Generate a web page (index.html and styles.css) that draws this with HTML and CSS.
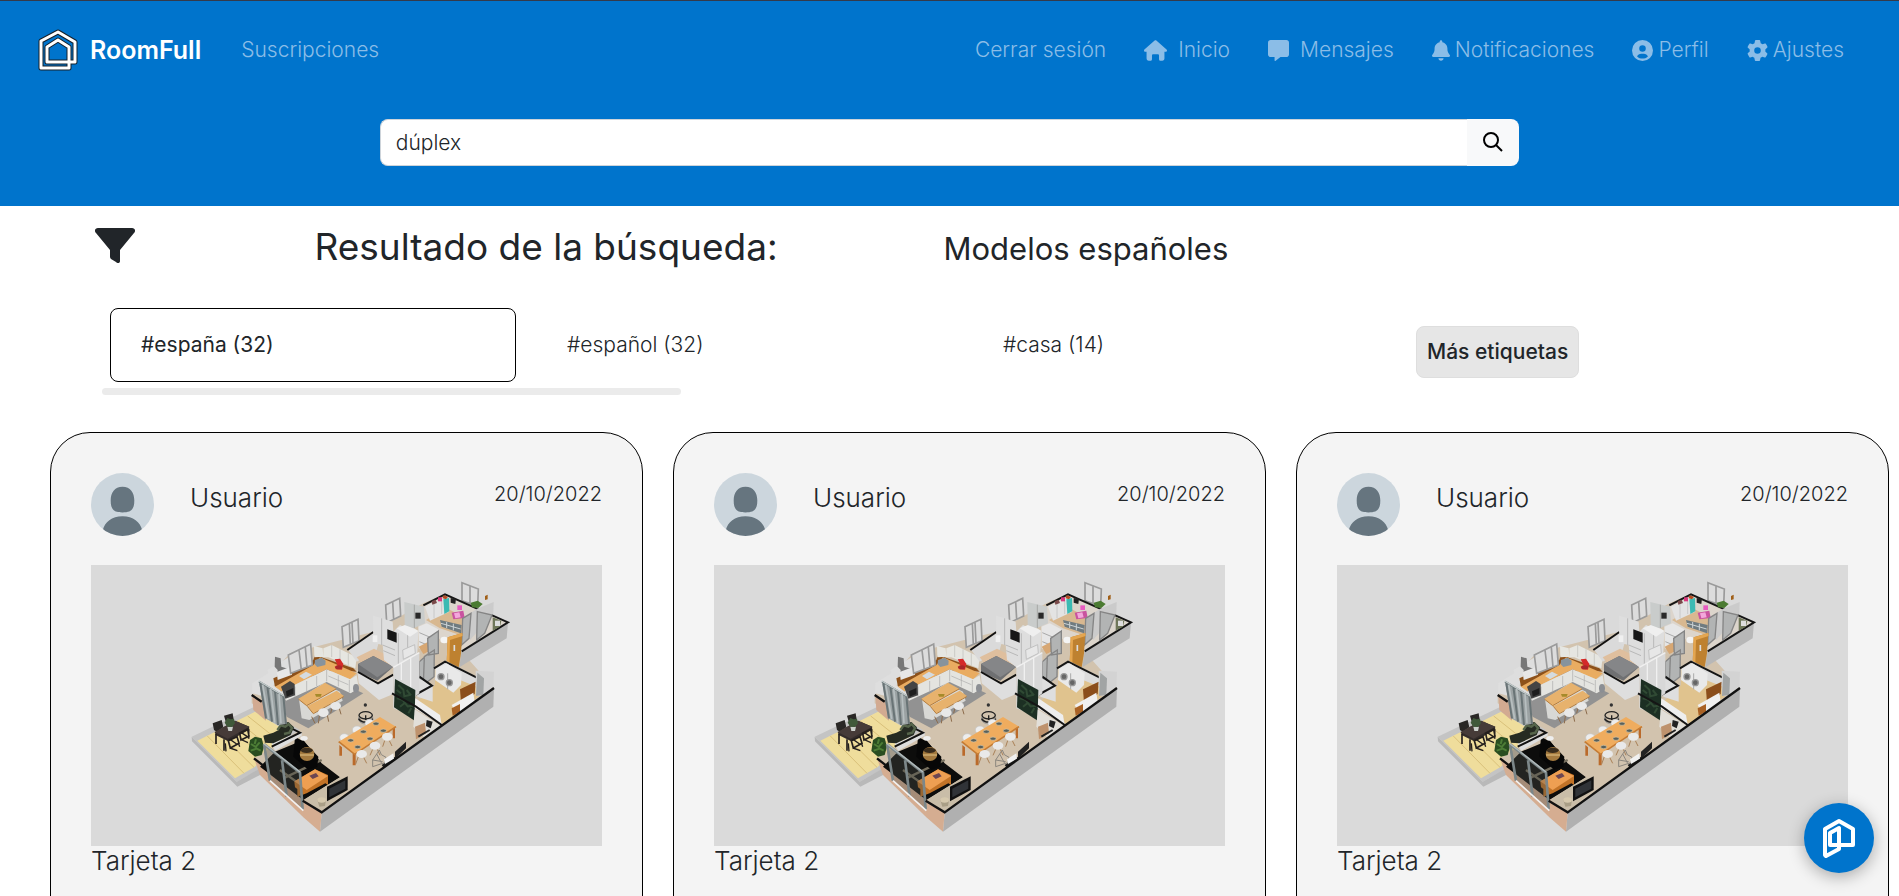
FILE: index.html
```html
<!DOCTYPE html>
<html lang="es">
<head>
<meta charset="utf-8">
<meta name="viewport" content="width=device-width, initial-scale=1">
<title>RoomFull</title>
<link rel="stylesheet" href="styles.css">
</head>
<body>
<svg class="sprites" aria-hidden="true">
  <symbol id="avatar" viewBox="0 0 64 64">
    <clipPath id="avatar-clip"><circle cx="32" cy="32" r="32"/></clipPath>
    <g clip-path="url(#avatar-clip)">
      <rect width="64" height="64" fill="#ccd6dd"/>
      <path d="M32 14c8 0 12 6 12 14 0 9-3 12-12 12s-12-3-12-12c0-8 4-14 12-14zM32 44c11 0 18 6 20 14v10H12V58c2-8 9-14 20-14z" fill="#66757f"/>
    </g>
  </symbol>
  <symbol id="house" viewBox="-267 -15 1533 843">
    <!-- terrace -->
    <path d="M35 500 235 405 370 480 305 560 170 635z" fill="#c4c4c4"/>
    <path d="M35 500 170 635 172 650 36 514zM170 635 240 595 240 615 172 650z" fill="#b9b9b9"/>
    <path d="M52 512 225 425 330 490 225 590 165 625z" fill="#efdd9c"/>
    <path d="M82 498 192 610M112 483 222 592M143 468 250 560M173 453 280 540M203 438 300 515" stroke="#d9c07a" stroke-width="3"/>
    <!-- main floor and outer walls -->
    <path d="M215 375 330 250 580 185 730 100 795 72 984 157 845 245 940 352 425 728 222 565 360 480 215 400z" fill="#d2c3ae"/>
    <path d="M425 728 942 352 940 410 420 785z" fill="#b0b0b0"/>
    <path d="M845 243 984 157 980 205 838 292z" fill="#b7b7b7"/>
    <path d="M222 565 425 728 420 785 370 742 240 615z" fill="#d5ad91"/>
    <path d="M217 375 258 400 258 452 220 420z" fill="#d2aa91"/>
    <!-- kitchen -->
    <path d="M300 380 440 320 550 370 385 475 320 440z" fill="#929292"/>
    <path d="M217 340 280 300 280 345 310 370 310 395 217 370zM262 300 326 262 336 320 280 345z" fill="#dedede"/>
    <path d="M280 325 325 305 400 270 405 255 520 295 530 305 470 300 335 335 285 350z" fill="#8d511a"/>
    <path d="M285 350 400 285 420 262 530 310 510 328 440 298 305 364z" fill="#e9ac61"/>
    <path d="M305 364 440 298 510 328 530 316 536 355 512 370 440 336 318 392z" fill="#e4e4e0"/>
    <path d="M345 350v30M380 333v30M410 318v30M440 300v34M475 316v33M508 330v36M445 318 505 344" stroke="#aaa" stroke-width="2"/>
    <path d="M402 228 428 235 430 260 403 262zM430 235 455 225 530 262 526 295 445 262 430 262z" fill="#e6e6e1"/>
    <path d="M455 225v36M480 238v36M505 250v36" stroke="#bcbcb8" stroke-width="2"/>
    <path d="M285 260 302 265 304 290 335 300 333 312 292 318 293 300 284 290z" fill="#777"/>
    <path d="M290 306 332 290 336 314 293 330z" fill="#e7e7e7"/>
    <path d="M303 350 330 333 344 342 345 376 316 386z" fill="#444"/>
    <path d="M318 364 340 354 340 372 320 380z" fill="#1e1e1e"/>
    <path d="M357 318 378 305 396 314 372 328z" fill="#d4dbe0"/>
    <path d="M405 270 425 263 437 272 436 285 412 291 404 283z" fill="#87939c"/>
    <path d="M464 268 480 266 490 282 486 299 468 298 464 290 473 286z" fill="#d42a29"/><ellipse cx="476" cy="292" rx="10" ry="6" fill="#a9282a"/>
    <path d="M357 388 365 445 388 450 488 392 480 365 430 340z" fill="#d8d8d5"/>
    <path d="M355 386 435 338 468 356 380 407zM382 408 470 362 492 378 400 430z" fill="#e7b26d"/>
    <path d="M356 388 380 407 468 357M382 409 400 431 491 380" fill="none" stroke="#b47b3a" stroke-width="3"/>
    <path d="M405 372h20l-3 8h-14z" fill="#a68a2a"/>
    <path d="M395 440l10 20M420 425l-5 35M440 425l6 30M458 405l-6 25M475 405l8 28" stroke="#8c6b4c" stroke-width="3"/>
    <ellipse cx="430" cy="428" rx="16" ry="13" fill="#e8e8e8"/><ellipse cx="467" cy="408" rx="16" ry="12" fill="#e8e8e8"/>
    <ellipse cx="528" cy="355" rx="9" ry="13" fill="#8c8f94"/>
    <!-- windows of the back facade -->
    <g fill="#dcdcdc" stroke="#9a9a9a" stroke-width="5">
      <path d="M325 255 392 222 397 285 332 310zM357 240 364 300M376 232 381 292"/>
      <path d="M486 170 534 148 537 212 490 232zM508 160 511 224M516 157 519 220"/>
      <path d="M617 105 659 85 662 138 620 158zM638 95 641 148"/>
      <path d="M846 38 895 57 893 108 846 92zM870 48 870 100"/>
    </g>
    <!-- bedroom -->
    <path d="M505 240 580 190 600 205 590 240 530 275z" fill="#dadada"/>
    <path d="M502 240 580 186" stroke="#111" stroke-width="6"/>
    <path d="M530 262 582 236 650 270 650 290 560 300z" fill="#dfbf9e"/>
    <path d="M532 300 595 340 640 318 640 372 597 390 536 340z" fill="#dedede"/>
    <path d="M534 282 580 258 640 290 592 332 534 306z" fill="#6f7072"/>
    <path d="M534 282 580 258 640 290 592 322z" fill="#858688"/>
    <path d="M534 306 594 340 640 314" fill="none" stroke="#111" stroke-width="6"/>
    <path d="M579 137 605 145 638 155 640 185 660 165 680 175 715 185 712 250 640 292 612 270 608 225 580 218z" fill="#dedede"/>
    <path d="M605 145v80M655 190v92M683 178v85M608 225 645 240M610 242 645 257" stroke="#b8b8b8" stroke-width="3"/>
    <path d="M622 178 650 188 650 218 622 207z" fill="#171717"/>
    <path d="M650 175 680 163 716 183 690 200z" fill="#efefef"/>
    <path d="M578 196h14v20h-14z" fill="#f0f0f0"/>
    <!-- second bedroom -->
    <path d="M730 105 795 72 984 157 845 245 715 170z" fill="#dcd5cc"/>
    <path d="M738 150 800 115 880 155 840 195 780 175z" fill="#d8b890"/>
    <path d="M730 106 795 73 984 157 845 244" fill="none" stroke="#151515" stroke-width="6"/>
    <path d="M735 110 798 80 808 125 750 152z" fill="#e3e3e3"/>
    <path d="M762 100v45M785 90v42" stroke="#bbb" stroke-width="2"/>
    <path d="M790 88 807 84 808 124 793 132z" fill="#3cbab3"/>
    <path d="M774 82h12v12h-12z" fill="#d9387d"/><path d="M790 76l14 4-6 8-10-3z" fill="#b44b21"/>
    <path d="M812 84 828 86 826 102 812 98z" fill="#222"/>
    <path d="M755 93l12-4 4 10-14 5z" fill="#7a4a4a"/>
    <path d="M673 96 732 110 735 160 700 175 674 165z" fill="#c9cccb"/><path d="M703 104v70" stroke="#a6a8a7" stroke-width="3"/>
    <path d="M706 128h16v18h-16z" fill="#292929"/>
    <path d="M780 150 845 165 843 190 785 170z" fill="#6f7b80"/><path d="M800 156v18M820 161v20M783 160 842 177" stroke="#cdd4d6" stroke-width="3"/>
    <path d="M815 128 850 122 854 144 820 148z" fill="#c9539f"/><path d="M832 106h14v14h-14z" fill="#e75bc0"/><path d="M822 130 838 127 842 142 826 145z" fill="#f3a7db"/>
    <path d="M715 170 740 160 775 178 770 230 745 250 716 235z" fill="#e6e6e6"/><path d="M718 188 758 205M718 215 750 228" stroke="#a9a9a9" stroke-width="3"/>
    <path d="M716 230 745 215 745 245 730 252z" fill="#d7a773"/>
    <ellipse cx="793" cy="210" rx="12" ry="10" fill="#f4f4f4"/>
    <path d="M872 98 893 92 908 102 895 114 876 112z" fill="#4b7b32"/><path d="M915 78 923 74 923 88 915 90z" fill="#a05f18"/>
    <path d="M895 115 941 96 940 130 915 160 870 210 870 130z" fill="#cbcbcb"/>
    <path d="M938 142 964 152 960 170 938 182z" fill="#6f7759"/><path d="M945 152h15v16h-15z" fill="#ddd"/>
    <!-- partition doors -->
    <g fill="#b2b4b4" stroke="#858585" stroke-width="4">
      <path d="M743 205 775 183 775 250 745 255zM848 145 873 130 867 205 845 225zM892 125 936 135 914 190 890 210zM733 260 763 240 762 320 730 345zM718 275 733 262 730 345 718 325z"/>
    </g>
    <path d="M803 202 847 189 843 250 836 292 800 280z" fill="#be8130"/><path d="M803 202 847 189 848 198 810 210 808 281 800 280z" fill="#e4a650"/><path d="M823 225v18" stroke="#ddd" stroke-width="5"/>
    <!-- laundry and bathroom -->
    <path d="M718 390 765 345 765 290 800 275 895 330 895 380 790 462 710 410z" fill="#e0c38e"/>
    <path d="M765 290 800 274 893 322 890 350 840 330 768 310z" fill="#dcdcdc"/>
    <path d="M762 295 795 275 895 325" fill="none" stroke="#151515" stroke-width="6"/>
    <path d="M767 297 800 280 845 310 843 345 820 368 765 330z" fill="#e9e9e9"/><path d="M803 310v48" stroke="#aaa" stroke-width="3"/>
    <circle cx="783" cy="320" r="9" fill="#666" stroke="#999" stroke-width="4"/><circle cx="808" cy="338" r="9" fill="#666" stroke="#999" stroke-width="4"/>
    <path d="M840 358 887 335 884 372 843 400z" fill="#8b4e1b"/><path d="M815 405 880 368 884 395 830 435z" fill="#f0f0f0"/><path d="M815 415 840 402 840 425 818 437z" fill="#a96225"/>
    <path d="M887 302 942 305 940 350 910 375 888 378z" fill="#d3d3d3"/><path d="M892 308 912 325 910 374 888 378z" fill="#a1a4a4"/>
    <path d="M715 325 758 345 758 395 712 380z" fill="#dedede"/><path d="M705 375 756 347 718 320" fill="none" stroke="#151515" stroke-width="6"/>
    <path d="M640 292 718 248 718 370 705 380 705 440 640 415z" fill="#d8d8d8"/>
    <path d="M640 292 718 248M664 280v50M692 263v90" stroke="#f0f0f0" stroke-width="4"/>
    <path d="M668 240 704 224 706 250 670 268z" fill="#e7e7e7" stroke="#c1c1c1" stroke-width="3"/>
    <path d="M645 327 706 360 704 452 642 412z" fill="#1c2f23"/><path d="M655 345l15 14 3 20 19-5M650 385l17 4 16 20 17-2M660 410l15-12M685 430l9-16M650 360l13 10M680 360l13 16" stroke="#304a34" stroke-width="6" fill="none"/>
    <path d="M706 385 780 435 785 465 704 415z" fill="#eee"/><path d="M636 370 708 410 785 465" fill="none" stroke="#151515" stroke-width="6"/>
    <path d="M704 418 782 467 735 505 700 470z" fill="#e2dfd9"/>
    <path d="M705 470 735 458 738 490 708 508z" fill="#be926d"/><path d="M740 450 758 455 752 475 738 468z" fill="#222"/><path d="M715 500l34-20" stroke="#222" stroke-width="6"/>
    <!-- dining room -->
    <path d="M536 441v10c8 14 34 14 42 0v-10" fill="none" stroke="#999" stroke-width="3"/><ellipse cx="557" cy="436" rx="20" ry="11" fill="none" stroke="#222" stroke-width="4"/><path d="M536 446c8 14 34 14 42 0" fill="none" stroke="#222" stroke-width="5"/><path d="M557 436v14" stroke="#222" stroke-width="4"/><circle cx="556" cy="405" r="5" fill="#333"/>
    <g fill="#ededed" stroke="#c4c4c4" stroke-width="2"><ellipse cx="493" cy="503" rx="14" ry="12"/><ellipse cx="531" cy="480" rx="14" ry="12"/><ellipse cx="569" cy="460" rx="14" ry="12"/></g>
    <path d="M478 525v32h8v-25zM518 550v36h9v-38zM638 475v30h7v-36z" fill="#ba6a2b"/>
    <path d="M476 515 600 441 648 470 524 553z" fill="#efac5e"/><path d="M476 515 524 553 648 470" fill="none" stroke="#c47b34" stroke-width="5"/>
    <g fill="#59605a" stroke="#cfc3a8" stroke-width="2"><ellipse cx="512" cy="511" rx="9" ry="5"/><ellipse cx="550" cy="485" rx="9" ry="5"/><ellipse cx="588" cy="461" rx="9" ry="5"/><ellipse cx="533" cy="531" rx="9" ry="5"/><ellipse cx="570" cy="506" rx="9" ry="5"/><ellipse cx="610" cy="482" rx="9" ry="5"/></g>
    <path d="M535 560l-8 22M550 560l10 20M578 538l-8 18M592 538l8 18M614 512l-6 18M628 512l8 16" stroke="#a98158" stroke-width="3"/>
    <g fill="#e9e9e9"><ellipse cx="545" cy="552" rx="16" ry="12"/><ellipse cx="585" cy="527" rx="16" ry="12"/><ellipse cx="622" cy="500" rx="16" ry="12"/></g>
    <path d="M578 590v-20l12-18 8-12 6 14 14 8-4 16zM590 552l15 28M578 570l30 5" fill="none" stroke="#8b867e" stroke-width="3"/>
    <path d="M605 585 645 560 645 545 678 515 678 535 640 572 610 592z" fill="#222"/><path d="M612 568 640 550 642 566 615 582z" fill="#f1f1f1"/>
    <!-- living room -->
    <path d="M285 545 370 510 425 580 480 622 370 690 240 590z" fill="#0d0d0c"/>
    <path d="M310 625 425 570M300 600 370 650" stroke="#77705f" stroke-width="7"/>
    <path d="M345 500 372 515 415 560 412 590 385 600 340 560z" fill="#070707"/>
    <ellipse cx="381" cy="552" rx="22" ry="21" fill="#a47a3f"/><ellipse cx="380" cy="541" rx="18" ry="8" fill="#392c1c"/><path d="M360 555h42" stroke="#d3b275" stroke-width="4"/>
    <path d="M343 635 345 652 352 657 352 680 380 670 436 640 444 645 444 615 405 598z" fill="#c27327"/><path d="M343 634 405 598 444 618 380 660z" fill="#ee9f52"/><path d="M388 617l20-8 8 10-18 8z" fill="#6d4652"/>
    <path d="M372 690 480 622 503 632 495 665 425 725z" fill="#c9bda8"/>
    <path d="M441 650 503 619 503 660 441 694z" fill="#111"/><path d="M448 656 496 631 496 656 448 682z" fill="#303337"/>
    <path d="M412 690 418 710 435 708 438 690" fill="#a99e86"/><ellipse cx="425" cy="690" rx="13" ry="8" fill="#d6c9ae"/>
    <path d="M275 520 365 485 365 497 285 543z" fill="#dedede"/><path d="M300 458 360 488 275 530" fill="none" stroke="#121212" stroke-width="6"/>
    <ellipse cx="372" cy="505" rx="11" ry="7" fill="#eee"/>
    <path d="M250 497 280 488 296 480 302 462 325 456 342 472 332 495 280 520 255 518z" fill="#262b22"/><path d="M292 480l10-14 14 4 10-8 10 12-8 14-16 4" stroke="#56654b" stroke-width="7" fill="none"/>
    <path d="M210 510 225 500 245 505 252 530 245 555 225 560 205 543z" fill="#294d20"/><path d="M213 522l14 9 12-14M212 542l18-6 12 6M228 508l-4 14" stroke="#4d7d36" stroke-width="6" fill="none"/>
    <!-- glazed panels -->
    <path d="M237 335 308 375 320 462 295 465 255 445z" fill="#9ba2a3"/>
    <path d="M237 335 310 378M241 340 258 445M262 350 276 455M285 363 294 465M310 378 318 462" stroke="#697476" stroke-width="6"/><path d="M248 344 266 447M272 357 284 458M297 372 303 460" stroke="#b7bfc0" stroke-width="5"/>
    <path d="M236 333 312 378" stroke="#c3cbcb" stroke-width="4"/>
    <path d="M252 523 360 608 368 718 270 630z" fill="#4d514a" fill-opacity=".35"/>
    <path d="M252 523 360 608 368 718M252 523 270 632M306 570 320 680" fill="none" stroke="#7c8789" stroke-width="8"/>
    <path d="M252 521 360 606" stroke="#b3bcbd" stroke-width="4"/>
    <path d="M270 632 370 722" stroke="#f1f1f1" stroke-width="5"/>
    <!-- terrace furniture -->
    <path d="M98 460 125 450 130 472 110 485 102 480zM132 437 158 430 162 455 140 465z" fill="#292725"/>
    <path d="M104 487 165 452 208 470 206 480 145 514 108 496z" fill="#332c2a"/>
    <path d="M104 486 165 452 208 470 143 506z" fill="#463b38"/>
    <path d="M108 492v30M132 508v34M206 476v30M145 512l26-12 6 20-26 14zM179 490l24-12 4 20-24 12z" fill="none" stroke="#241f1d" stroke-width="5"/>
    <path d="M150 508l20 14M184 488l18 12M136 520l2 24M150 534l22 8M175 518l4 12M186 510l18 8" stroke="#241f1d" stroke-width="4"/>
    <path d="M142 470h17l-3 13h-11z" fill="#cbd0cb"/><path d="M134 458 142 444 152 448 162 446 165 460 156 471 142 470z" fill="#40593a"/>
    <path d="M215 375 245 395M222 565 250 587M368 692 425 727 942 354" fill="none" stroke="#111" stroke-width="7"/>
  </symbol>
</svg>

<div class="page">
  <header class="header">
    <nav class="navbar" aria-label="Principal">
      <a class="brand" href="#">
        <svg class="brand-logo" viewBox="0 0 40 42" fill="none" stroke-linejoin="round" aria-hidden="true">
          <path d="M3 12 20 3 37 13V33H9V18L20 11 31 18V39H3z" stroke="#17202a" stroke-width="5"/>
          <path d="M3 12 20 3 37 13V33H9V18L20 11 31 18V39H3z" stroke="#fff" stroke-width="3"/>
        </svg>
        RoomFull
      </a>
      <a class="nav-link" href="#">Suscripciones</a>
      <div class="nav-end">
        <a class="nav-link" href="#">Cerrar sesión</a>
        <a class="nav-link wide" href="#"><svg viewBox="0 0 576 512" width="23" height="21" aria-hidden="true"><path d="M575.800 255.500c0 18-15 32.100-32 32.100h-32l.7 160.200c0 35-20 64.200-56 64.200H416c-22 0-40-18-40-40v-88c0-18-14-32-32-32H232c-18 0-32 14-32 32v88c0 22-18 40-40 40h-40c-36 0-56-28-56-64V287.600H32c-18 0-32-14-32-32.100 0-9 3-17 10-24L266.400 8c7-7 15-8 22-8s15 2 21 7l255.400 224.500c8 7 12 15 11 24z"/></svg>Inicio</a>
        <a class="nav-link wide" href="#"><svg viewBox="0 0 512 512" width="21" height="21" aria-hidden="true"><path d="M448 0H64C28.700 0 0 28.700 0 64v288c0 35.300 28.700 64 64 64h96v84c0 9.800 11.200 15.500 19.100 9.700L304 416h144c35.300 0 64-28.700 64-64V64c0-35.300-28.700-64-64-64z"/></svg>Mensajes</a>
        <a class="nav-link" href="#"><svg viewBox="0 0 448 512" width="18" height="21" aria-hidden="true"><path d="M224 0c-17.700 0-32 14.300-32 32v19.200C119 66 64 130.600 64 208v18.800c0 47-17.300 92.400-48.500 127.600l-7.400 8.300c-8.400 9.400-10.400 22.900-5.300 34.400S19.400 416 32 416h384c12.600 0 24-7.400 29.200-18.900s3.100-25-5.300-34.400l-7.400-8.300C401.300 319.200 384 273.900 384 226.800V208c0-77.400-55-142-128-156.800V32c0-17.700-14.300-32-32-32zm45.300 493.300c12-12 18.700-28.300 18.700-45.300H160c0 17 6.700 33.300 18.700 45.300S207 512 224 512s33.300-6.700 45.300-18.700z"/></svg>Notificaciones</a>
        <a class="nav-link" href="#"><svg viewBox="0 0 512 512" width="21" height="21" aria-hidden="true"><path fill-rule="evenodd" d="M256 0a256 256 0 1 0 0 512 256 256 0 0 0 0-512zm0 128a80 80 0 1 1 0 160 80 80 0 0 1 0-160zm-132 272c20-38 54-64 100-64h64c46 0 80 26 100 64-76 72-188 72-264 0z"/></svg>Perfil</a>
        <a class="nav-link" href="#"><svg viewBox="0 0 512 512" width="21" height="21" aria-hidden="true"><path fill-rule="evenodd" d="M495.900 166.600c3.200 8.700.5 18.400-6.400 24.600l-43.300 39.400c1.100 8.300 1.700 16.800 1.700 25.400s-.6 17.100-1.700 25.400l43.300 39.400c6.900 6.200 9.600 15.900 6.400 24.600-10 27-25 53-42 75-6 7-15 10-24 7l-55.700-17.700c-13.400 10.300-28.200 18.900-44 25.400l-12.500 57.100c-2 9.100-9 16.300-18.200 17.800-29 5-61 5-90 0-9.200-1.500-16.200-8.700-18.200-17.800l-12.500-57.100c-15.800-6.500-30.600-15.100-44-25.400L83.100 425.900c-9 3-18 0-24-7-18-23-32-48-42-75-3.200-8.700-.5-18.400 6.400-24.600l43.300-39.400C65.600 273.100 65 264.600 65 256s.6-17.100 1.700-25.400l-43.200-39.400c-6.900-6.200-9.600-15.900-6.400-24.600 10-27 25-53 42-75 6-7 15-10 24-7l55.700 17.700c13.400-10.300 28.200-18.900 44-25.400l12.500-57.100c2-9.100 9-16.300 18.200-17.800 29-5 61-5 90 0 9.200 1.500 16.200 8.700 18.200 17.800l12.500 57.100c15.800 6.500 30.600 15.100 44 25.400l55.700-17.700c9-3 18 0 24 7 18 23 32 48 42 75zM256 336a80 80 0 1 0 0-160 80 80 0 0 0 0 160z"/></svg>Ajustes</a>
      </div>
    </nav>
    <form class="search" role="search">
      <input class="search-input" type="search" value="dúplex" aria-label="Buscar">
      <button class="search-button" type="button" aria-label="Buscar">
        <svg viewBox="0 0 20 20" width="20" height="20" fill="none" stroke="#000" stroke-width="2" aria-hidden="true"><circle cx="8" cy="8" r="7"/><path d="m13 13 6 6"/></svg>
      </button>
    </form>
  </header>

  <main>
    <div class="results">
      <button class="filter" type="button" aria-label="Filtrar">
        <svg viewBox="0 0 40 35" width="40" height="35" aria-hidden="true"><path d="M3 0H37C40 0 41 3 39 5L25 22V33C25 35 23 36 21 34L16 31C15 30 15 29 15 28V22L1 5C-1 3 0 0 3 0z" fill="#212529"/></svg>
      </button>
      <h1 class="results-title">Resultado de la búsqueda:</h1>
      <h2 class="results-subtitle">Modelos españoles</h2>
    </div>

    <div class="tags">
      <a class="tag tag-active" href="#">#españa (32)</a>
      <a class="tag" href="#">#español (32)</a>
      <a class="tag" href="#">#casa (14)</a>
      <button class="more" type="button">Más etiquetas</button>
    </div>
    <div class="scroll-track"></div>

    <div class="cards">
      <article class="card">
        <div class="card-head">
          <svg class="avatar" role="img" aria-label="Avatar"><use href="#avatar"/></svg>
          <span class="user">Usuario</span>
          <time class="date" datetime="2022-10-20">20/10/2022</time>
        </div>
        <svg class="photo" viewBox="0 0 1533 843" role="img" aria-label="Plano 3D de la vivienda"><use href="#house" width="1533" height="843"/></svg>
        <h3 class="card-title">Tarjeta 2</h3>
      </article>
      <article class="card">
        <div class="card-head">
          <svg class="avatar" role="img" aria-label="Avatar"><use href="#avatar"/></svg>
          <span class="user">Usuario</span>
          <time class="date" datetime="2022-10-20">20/10/2022</time>
        </div>
        <svg class="photo" viewBox="0 0 1533 843" role="img" aria-label="Plano 3D de la vivienda"><use href="#house" width="1533" height="843"/></svg>
        <h3 class="card-title">Tarjeta 2</h3>
      </article>
      <article class="card">
        <div class="card-head">
          <svg class="avatar" role="img" aria-label="Avatar"><use href="#avatar"/></svg>
          <span class="user">Usuario</span>
          <time class="date" datetime="2022-10-20">20/10/2022</time>
        </div>
        <svg class="photo" viewBox="0 0 1533 843" role="img" aria-label="Plano 3D de la vivienda"><use href="#house" width="1533" height="843"/></svg>
        <h3 class="card-title">Tarjeta 2</h3>
      </article>
    </div>
  </main>

  <button class="fab" type="button" aria-label="RoomFull">
    <svg viewBox="0 0 34 40" width="34" height="40" fill="none" stroke="#fff" stroke-width="4" stroke-linejoin="round" aria-hidden="true"><path d="M3 11 17 3 31 11V27H8V15L17 10V31L4 38 3 37z"/></svg>
  </button>
</div>
</body>
</html>
```
FILE: styles.css
```css
* {
  box-sizing: border-box;
}

body {
  margin: 0;
  background: #fff;
  color: #212529;
  font-family: Inter, "Liberation Sans", sans-serif;
  font-size: 21px;
  font-weight: 300;
  line-height: 30px;
}

a {
  color: inherit;
  text-decoration: none;
}

button,
input {
  font: inherit;
  color: inherit;
}

h1,
h2,
h3 {
  margin: 0;
}

.sprites {
  position: absolute;
  width: 0;
  height: 0;
}

.page {
  height: 100vh;
  overflow: hidden;
}

.header {
  border-top: 1px solid #343a4a;
  padding-bottom: 40px;
  background: #0074cc;
}

.navbar {
  display: flex;
  align-items: center;
  height: 98px;
  padding: 0 55px 0 38px;
}

.brand {
  display: flex;
  align-items: center;
  gap: 12px;
  margin-right: 40px;
  color: #fff;
  font-size: 25px;
  font-weight: 600;
}

.brand-logo {
  width: 40px;
  height: 42px;
}

.nav-link {
  display: flex;
  align-items: center;
  gap: 5px;
  color: #8bbde7;
}

.nav-link svg {
  fill: currentColor;
}

.wide {
  gap: 11px;
}

.nav-end {
  display: flex;
  gap: 38px;
  margin-left: auto;
}

.search {
  display: flex;
  width: 60%;
  height: 47px;
  margin: 20px auto 0;
}

.search-input {
  flex: 1;
  min-width: 0;
  padding: 0 15px;
  border: 1px solid #ced4da;
  border-right: 0;
  border-radius: 8px 0 0 8px;
  background: #fff;
  outline: 0;
  appearance: none;
}

.search-button {
  display: grid;
  place-items: center;
  width: 52px;
  padding: 0 0 2px;
  border: 0;
  border-radius: 0 8px 8px 0;
  background: #f8f9fa;
}

.results {
  display: grid;
  grid-template-columns: 2fr 4fr 6fr;
  align-items: baseline;
  margin-right: 12px;
  padding-top: 16px;
}

.filter {
  display: block;
  justify-self: start;
  align-self: start;
  margin-left: 95px;
  padding: 6px 0 0;
  border: 0;
  background: none;
}

.filter svg {
  display: block;
}

.results-title {
  font-size: 37px;
  font-weight: 400;
  line-height: 50px;
}

.results-subtitle {
  font-size: 31px;
  font-weight: 400;
  line-height: 50px;
}

.tags {
  display: grid;
  grid-template-columns: 457fr 436fr 413fr 483fr;
  align-items: center;
  height: 74px;
  margin-top: 34px;
  padding-left: 110px;
}

.tag-active {
  align-self: stretch;
  display: flex;
  align-items: center;
  margin-right: 51px;
  padding-left: 30px;
  border: 1px solid #000;
  border-radius: 8px;
  font-weight: 400;
}

.more {
  justify-self: start;
  align-self: end;
  margin-bottom: 4px;
  padding: 10px;
  border: 1px solid #dedede;
  border-radius: 8px;
  background: #e6e6e6;
  font-weight: 500;
}

.scroll-track {
  width: 579px;
  height: 7px;
  margin: 6px 0 0 102px;
  border-radius: 4px;
  background: #ebebeb;
}

.cards {
  display: grid;
  grid-template-columns: repeat(3, 1fr);
  gap: 30px;
  margin-top: 37px;
  padding: 0 10px 30px 50px;
}

.card {
  padding: 40px 40px 60px;
  border: 1px solid #000;
  border-radius: 40px;
  background: #f4f4f4;
}

.card-head {
  display: flex;
  align-items: flex-start;
  margin-bottom: 29px;
}

.avatar {
  width: 63px;
  height: 63px;
  margin-right: 36px;
}

.user {
  margin-top: 10px;
  font-size: 26px;
}

.date {
  margin: 6px 0 0 auto;
  font-size: 20px;
}

.photo {
  display: block;
  width: 100%;
  height: auto;
  background: #dadada;
}

.card-title {
  font-size: 26px;
  font-weight: 300;
}

.fab {
  position: fixed;
  right: 25px;
  bottom: 23px;
  display: grid;
  place-items: center;
  width: 70px;
  height: 70px;
  padding: 0;
  border: 0;
  border-radius: 50%;
  background: #0074cc;
  box-shadow: 0 4px 16px rgba(0, 0, 0, 0.3);
}
```
